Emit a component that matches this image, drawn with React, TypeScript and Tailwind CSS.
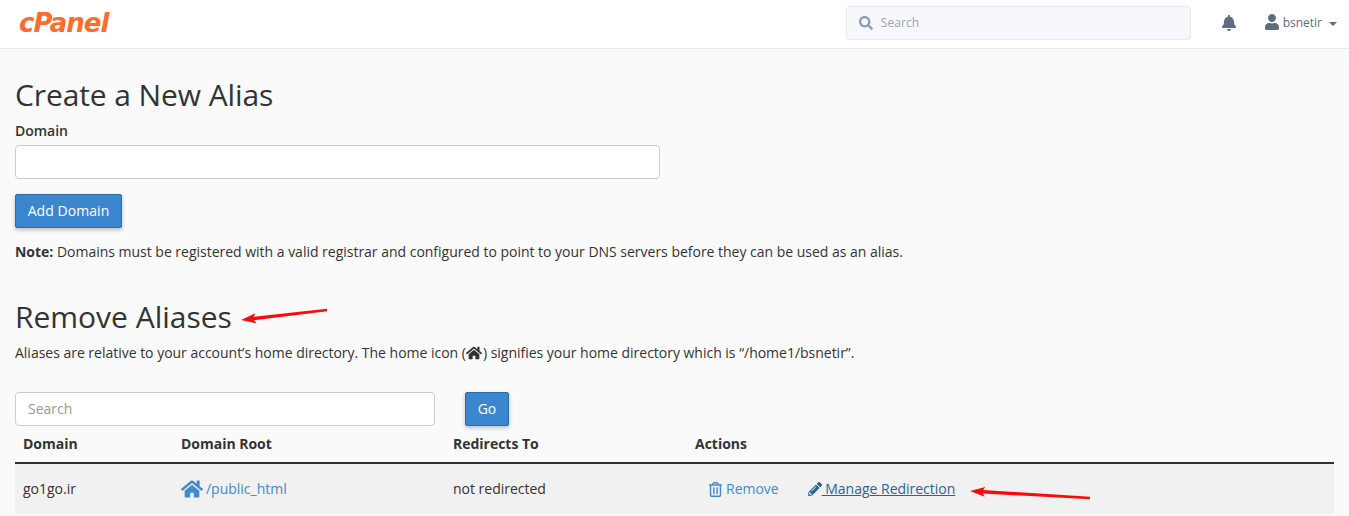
import React from 'react'
import { FaBell, FaHome, FaPencilAlt, FaRegTrashAlt, FaSearch, FaUser } from 'react-icons/fa'

const Arrow = ({ x1, y1, x2, y2 }: { x1: number; y1: number; x2: number; y2: number }) => {
  // head points at (x1, y1), tail tapers off to (x2, y2)
  const a = Math.atan2(y2 - y1, x2 - x1)
  const px = (d: number, s: number) => x1 + Math.cos(a) * d - Math.sin(a) * s
  const py = (d: number, s: number) => y1 + Math.sin(a) * d + Math.cos(a) * s
  const pts = [
    [x1, y1],
    [px(15, -5), py(15, -5)],
    [px(13, -1.8), py(13, -1.8)],
    [x2, y2 - 1.3],
    [x2, y2 + 1.3],
    [px(13, 1.8), py(13, 1.8)],
    [px(15, 5), py(15, 5)],
  ]
  return (
    <svg className="absolute left-0 top-0 pointer-events-none" width="1349" height="516">
      <polygon points={pts.map((p) => p.join(',')).join(' ')} fill="#fa0a0a" />
    </svg>
  )
}

const App = () => {
  return (
    <div className="relative h-[516px] overflow-hidden bg-[#fafafa] font-['Open_Sans',sans-serif] text-[14px] leading-[20px] tracking-[-0.015px] text-[#333]">
      {/* Top bar */}
      <header className="flex h-[49px] items-center border-b border-[#e4e9f3] bg-white pb-[2px] pl-[19px] pr-[12px]">
        <span className="font-['DejaVu_Sans',sans-serif] text-[26px] font-bold italic leading-none tracking-[-1px] text-[#ff6c2c]">cPanel</span>
        <div className="ml-auto flex h-[34px] w-[345px] items-center rounded-[4px] border border-[#e4e9f3] bg-[#f6f8fc] pl-[12px] text-[12px] tracking-[0.1px] text-[#9aa3b2]">
          <FaSearch className="mr-[8px] text-[14px] text-[#8c9ab8]" />
          Search
        </div>
        <FaBell className="ml-[30px] text-[16px] text-[#5f6b7e]" />
        <div className="ml-[27px] flex items-center text-[12px] text-[#5f6b7e]">
          <FaUser className="mr-[3px] -translate-y-[1px] text-[16px]" />
          bsnetir
          <span className="ml-[7px] mt-[2px] h-0 w-0 border-x-[4px] border-t-[4px] border-x-transparent border-t-[#5f6b7e]" />
        </div>
      </header>

      <main className="px-[15px]">
        <h1 className="mt-[26px] text-[30px] font-normal leading-[40px] tracking-[-0.1px]">Create a New Alias</h1>
        <label className="mt-[6px] block font-semibold">Domain</label>
        <input className="mt-[4px] block h-[34px] w-[645px] rounded-[4px] border border-[#ccc] bg-white" />
        <button className="mt-[15px] block h-[34px] w-[107px] rounded-[2px] border border-[#2e6da4] bg-[#3a87cf] tracking-[0.05px] text-white shadow-[0_2px_4px_rgba(0,0,0,0.25)]">
          Add Domain
        </button>
        <p className="mt-[14px]">
          <strong className="font-bold">Note:</strong> Domains must be registered with a valid registrar and configured to point to your DNS servers before they can be used as an alias.
        </p>

        <h2 className="mt-[35px] text-[30px] font-normal leading-[40px]">Remove Aliases</h2>
        <p className="mt-[6px] flex items-center">
          Aliases are relative to your account’s home directory. The home icon (<FaHome className="mr-[1px] text-[16px]" />) signifies your home directory which is “/home1/bsnetir”.
        </p>

        <div className="mt-[29px] flex">
          <input placeholder="Search" className="h-[34px] w-[420px] rounded-[4px] border border-[#ccc] bg-white px-[12px] pb-[2px] placeholder:text-[#999]" />
          <button className="ml-[30px] h-[34px] w-[44px] rounded-[2px] border border-[#2e6da4] bg-[#3a87cf] text-white shadow-[0_2px_4px_rgba(0,0,0,0.25)]">
            Go
          </button>
        </div>

        {/* Aliases table */}
        <div className="grid w-[1319px] grid-cols-[158px_272px_242px_1fr]">
          <div className="col-span-4 grid grid-cols-subgrid border-b-[2px] border-[#333] py-[8px] font-bold">
            <div className="pl-[8px]">Domain</div>
            <div className="pl-[8px]">Domain Root</div>
            <div className="pl-[8px]">Redirects To</div>
            <div className="pl-[8px]">Actions</div>
          </div>
          <div className="col-span-4 grid h-[50px] grid-cols-subgrid items-center bg-[#f1f1f1]">
            <div className="pl-[8px]">go1go.ir</div>
            <a className="flex items-center pl-[8px] text-[#428bca]">
              <FaHome className="mr-[3px] text-[22px]" />
              /public_html
            </a>
            <div className="pl-[8px]">not redirected</div>
            <div className="flex items-center pl-[21px]">
              <a className="flex items-center text-[#428bca]">
                <FaRegTrashAlt className="mr-[3px] text-[15px]" />
                Remove
              </a>
              <a className="ml-[29px] flex items-center text-[#2a6496]">
                <FaPencilAlt className="text-[14px]" />
                <span className="underline">&nbsp;Manage Redirection</span>
              </a>
            </div>
          </div>
        </div>
      </main>

      {/* Annotation arrows */}
      <Arrow x1={241} y1={320} x2={327} y2={310} />
      <Arrow x1={970} y1={491} x2={1090} y2={498} />
    </div>
  )
}

export default App
